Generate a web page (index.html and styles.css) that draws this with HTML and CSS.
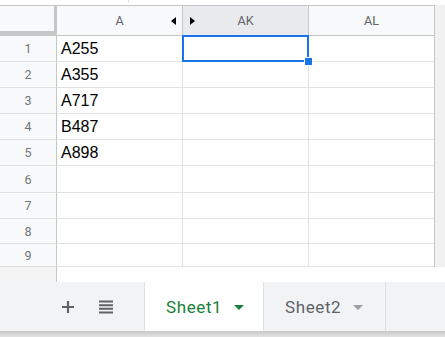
FILE: index.html
```html
<!DOCTYPE html>
<html lang="en">
  <head>
    <meta charset="UTF-8" />
    <title>Sheet</title>
    <link rel="stylesheet" href="styles.css">
  </head>
  <body>
    <div class="top"><span class="tick"></span></div>

    <div class="grid">
      <div class="corner"></div>
      <div class="colhead">A<span class="arr left"></span></div>
      <div class="colhead active">AK<span class="arr right"></span></div>
      <div class="colhead">AL</div>
      <div class="scroll"></div>

      <div class="rowhead">1</div><div class="cell">A255</div><div class="cell sel"></div><div class="cell"></div><div class="scroll"></div>
      <div class="rowhead">2</div><div class="cell">A355</div><div class="cell"></div><div class="cell"></div><div class="scroll"></div>
      <div class="rowhead">3</div><div class="cell">A717</div><div class="cell"></div><div class="cell"></div><div class="scroll"></div>
      <div class="rowhead">4</div><div class="cell">B487</div><div class="cell"></div><div class="cell"></div><div class="scroll"></div>
      <div class="rowhead">5</div><div class="cell">A898</div><div class="cell"></div><div class="cell"></div><div class="scroll"></div>
      <div class="rowhead">6</div><div class="cell"></div><div class="cell"></div><div class="cell"></div><div class="scroll"></div>
      <div class="rowhead">7</div><div class="cell"></div><div class="cell"></div><div class="cell"></div><div class="scroll"></div>
      <div class="rowhead">8</div><div class="cell"></div><div class="cell"></div><div class="cell"></div><div class="scroll"></div>
      <div class="rowhead">9</div><div class="cell"></div><div class="cell"></div><div class="cell"></div><div class="scroll"></div>

      <div class="filler-head"></div>
      <div class="filler"></div>
    </div>

    <div class="tabbar">
      <div class="tools">
        <svg width="14" height="14" viewBox="0 0 14 14"><path d="M7 1v12M1 7h12" stroke="#5f6368" stroke-width="2.2" fill="none"/></svg>
        <svg width="16" height="14" viewBox="0 0 16 14"><path d="M1 1.5h14M1 5.2h14M1 8.8h14M1 12.5h14" stroke="#5f6368" stroke-width="2" fill="none"/></svg>
      </div>
      <div class="tab current">Sheet1<span class="caret"></span></div>
      <div class="tab">Sheet2<span class="caret"></span></div>
      <div class="rest"></div>
    </div>
    <div class="shadow"></div>
  </body>
</html>
```

FILE: styles.css
```css
body {
  margin: 0;
  width: 445px;
  height: 337px;
  overflow: hidden;
  background: #fff;
  font-family: Roboto, "Liberation Sans", sans-serif;
}

.top {
  height: 5px;
  position: relative;
}
.tick {
  position: absolute;
  left: 128px;
  top: 0;
  width: 1px;
  height: 3px;
  background: #e0e0e0;
}

.grid {
  display: grid;
  grid-template-columns: 57px 126px 126px 126px 10px;
  grid-template-rows: 31px 26px 26px 26px 26px 26px 27px 26px 25px 23px 15px;
}

.corner {
  background: #f8f9fa;
  border-top: 1px solid #c4c7c5;
  border-right: 4px solid #c4c7c5;
  border-bottom: 5px solid #c4c7c5;
  margin-right: -1px;
}

.colhead {
  position: relative;
  background: #f8f9fa;
  border-top: 1px solid #c4c7c5;
  border-bottom: 1px solid #c4c7c5;
  border-right: 1px solid #c4c7c5;
  color: #5f6368;
  font-size: 12.5px;
  display: flex;
  align-items: center;
  justify-content: center;
}
.colhead.active {
  background: #e8eaed;
}

.arr {
  position: absolute;
  top: 11px;
  width: 0;
  height: 0;
  border-top: 4px solid transparent;
  border-bottom: 4px solid transparent;
}
.arr.left {
  right: 6px;
  border-right: 5px solid #000;
}
.arr.right {
  left: 7px;
  border-left: 5px solid #000;
}

.scroll {
  background: #f1f1f1;
  border-left: 1px solid #c4c7c5;
  margin-left: -1px;
}

.rowhead {
  background: #f8f9fa;
  border-right: 1px solid #c4c7c5;
  border-bottom: 1px solid #e0e0e0;
  color: #70757a;
  font-size: 12.5px;
  display: flex;
  align-items: center;
  justify-content: center;
}

.cell {
  border-right: 1px solid #e2e2e2;
  border-bottom: 1px solid #e2e2e2;
  font-family: "Liberation Sans", Arial, sans-serif;
  font-size: 16px;
  color: #000;
  padding-left: 4px;
  display: flex;
  align-items: flex-end;
  padding-bottom: 3px;
}

.sel {
  position: relative;
}
.sel::before {
  content: "";
  position: absolute;
  left: -1px;
  top: -1px;
  right: -1px;
  bottom: -1px;
  border: 2px solid #1a73e8;
}
.sel::after {
  content: "";
  position: absolute;
  right: -5px;
  bottom: -5px;
  width: 9px;
  height: 9px;
  background: #1a73e8;
  border: 1px solid #fff;
  box-sizing: border-box;
}

.filler-head {
  background: #f3f3f3;
  border-right: 1px solid #c4c7c5;
}
.filler {
  grid-column: span 4;
}

.tabbar {
  display: flex;
  height: 49px;
  background: #f1f3f4;
}
.tools {
  width: 145px;
  display: flex;
  align-items: center;
  justify-content: flex-end;
  gap: 23px;
  padding-right: 30px;
  box-sizing: border-box;
  border-right: 1px solid #e0e0e0;
}
.tab {
  width: 122px;
  box-sizing: border-box;
  border-right: 1px solid #e0e0e0;
  display: flex;
  align-items: center;
  padding-left: 21px;
  font-size: 17px;
  font-weight: 400;
  letter-spacing: 0.6px;
  color: #5f6368;
}
.tab.current {
  width: 119px;
  background: #fff;
  color: #188038;
}
.caret {
  margin-left: 12px;
  margin-top: 2px;
  width: 0;
  height: 0;
  border-left: 5px solid transparent;
  border-right: 5px solid transparent;
  border-top: 5px solid #9aa0a6;
}
.tab.current .caret {
  border-top-color: #188038;
}
.rest {
  flex: 1;
}

.shadow {
  height: 7px;
  background: linear-gradient(#c8c8c8, #e8e8e8);
}
```
